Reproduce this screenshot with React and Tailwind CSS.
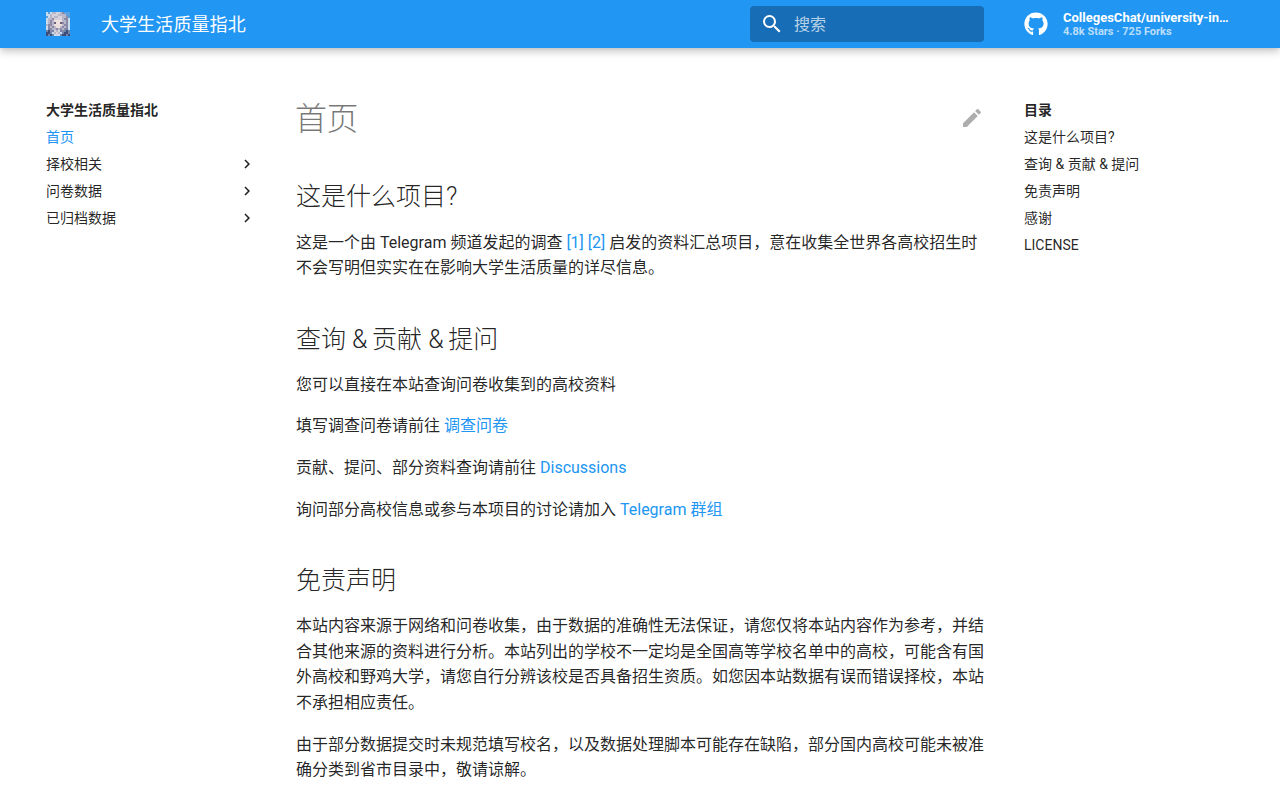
import { FaGithub } from 'react-icons/fa';

const FONT = { fontFamily: 'Roboto, "Noto Sans CJK SC", sans-serif' };

const PALETTE = {
  S: '#5d9fdc', C: '#c8dcec', H: '#b8b6c8', L: '#d6d2dc', D: '#8a8aa6',
  F: '#eee0de', E: '#6a5f78', N: '#3d4c78', B: '#7086ac',
};
const AVATAR = [
  'CSCHHLLHDSSS',
  'CCHLLLHHHHSS',
  'SCHLHHLLHHDS',
  'CHHDLLLLHDDC',
  'CHDHFFFFHHDC',
  'CHDHEFFEDHDC',
  'HDDHFFFFHDDC',
  'CDHDHFFHDHDC',
  'CBDHHDHDHDBC',
  'BNDBLHLBDBNB',
  'NNBCHLHCBNNB',
  'NBNBCLCBNNBN',
];

function Avatar() {
  return (
    <svg width="24" height="24" viewBox="0 0 12 12" shapeRendering="crispEdges" className="block">
      {AVATAR.flatMap((r, y) => [...r].map((c, x) => <rect key={`${x}-${y}`} x={x} y={y} width="1" height="1" fill={PALETTE[c]} />))}
    </svg>
  );
}

function Chevron() {
  return (
    <svg width="18" height="18" viewBox="0 0 24 24" fill="currentColor" className="text-black/87">
      <path d="M8.59 16.58 13.17 12 8.59 7.41 10 6l6 6-6 6-1.41-1.42z" />
    </svg>
  );
}

const Link = ({ children }) => <a className="text-[#2196f3]">{children}</a>;

const Amp = () => <span className="tracking-[-1.5px]">&</span>;

const H2 = ({ children }) => (
  <h2 className="text-[25px] font-light leading-[35px] h-[34px] mt-[41px] mb-4 text-black/87">{children}</h2>
);

const P = ({ children }) => <p className="my-4 text-base leading-[25.6px] text-black/87">{children}</p>;

const NavRow = ({ children, chevron, active, bold }) => (
  <div className={`h-[27px] flex items-center justify-between text-sm ${active ? 'text-[#2196f3]' : 'text-black/87'} ${bold ? 'font-bold' : ''}`}>
    <span>{children}</span>
    {chevron && <Chevron />}
  </div>
);

export default function App() {
  return (
    <div style={FONT} className="h-screen overflow-hidden bg-white flex flex-col">
      <header className="h-12 shrink-0 bg-[#2196f3] text-white flex items-center pl-[46px] shadow-[0_0_4px_rgba(0,0,0,0.1),0_4px_8px_rgba(0,0,0,0.2)] z-10">
        <Avatar />
        <div className="ml-[31px] mt-0.5 text-lg tracking-[0.1px] w-[649px]">大学生活质量指北</div>
        <div className="w-[234px] h-9 rounded-sm bg-[#186eb6] flex items-center pl-2.5">
          <svg width="24" height="24" viewBox="0 0 24 24" fill="currentColor" className="text-white">
            <path d="M9.5 3A6.5 6.5 0 0 1 16 9.5c0 1.61-.59 3.09-1.56 4.23l.27.27h.79l5 5-1.5 1.5-5-5v-.79l-.27-.27A6.516 6.516 0 0 1 9.5 16 6.5 6.5 0 0 1 3 9.5 6.5 6.5 0 0 1 9.5 3m0 2C7 5 5 7 5 9.5S7 14 9.5 14 14 12 14 9.5 12 5 9.5 5z" />
          </svg>
          <span className="ml-[10px] mt-0.5 text-base text-white/70">搜索</span>
        </div>
        <div className="ml-10 flex items-center">
          <FaGithub size={24} />
          <div className="ml-[15px] w-[166px]">
            <div className="truncate text-[13px] font-bold leading-[14px]">CollegesChat/university-information</div>
            <div className="text-[11px] font-bold leading-[13px] text-white/70">4.8k Stars · 725 Forks</div>
          </div>
        </div>
      </header>

      <main className="flex pl-[46px] pt-[50px]">
        <nav className="w-[210px] shrink-0 mt-[-2px]">
          <NavRow bold>大学生活质量指北</NavRow>
          <NavRow active>首页</NavRow>
          <NavRow chevron>择校相关</NavRow>
          <NavRow chevron>问卷数据</NavRow>
          <NavRow chevron>已归档数据</NavRow>
        </nav>

        <article className="ml-10 w-[688px] shrink-0">
          <div className="flex justify-between">
            <h1 className="text-[32px] font-light leading-[41.6px] mt-px mb-[38px] -ml-px tracking-[-0.5px] text-black/54">首页</h1>
            <svg width="24" height="24" viewBox="0 0 24 24" fill="currentColor" className="mt-2 text-black/32">
              <path d="M20.71 7.04c.39-.39.39-1.04 0-1.41l-2.34-2.34c-.37-.39-1.02-.39-1.41 0l-1.84 1.83 3.75 3.75M3 17.25V21h3.75L17.81 9.93l-3.75-3.75L3 17.25z" />
            </svg>
          </div>
          <h2 className="text-[25px] font-light leading-[35px] mb-4 text-black/87">这是什么项目?</h2>
          <P>这是一个由 Telegram 频道发起的调查 <Link>[1]</Link> <Link>[2]</Link> 启发的资料汇总项目，意在收集全世界各高校招生时不会写明但实实在在影响大学生活质量的详尽信息。</P>
          <H2>查询 <Amp /> 贡献 <Amp /> 提问</H2>
          <P>您可以直接在本站查询问卷收集到的高校资料</P>
          <P>填写调查问卷请前往 <Link>调查问卷</Link></P>
          <P>贡献、提问、部分资料查询请前往 <Link>Discussions</Link></P>
          <P>询问部分高校信息或参与本项目的讨论请加入 <Link>Telegram 群组</Link></P>
          <H2>免责声明</H2>
          <P>本站内容来源于网络和问卷收集，由于数据的准确性无法保证，请您仅将本站内容作为参考，并结合其他来源的资料进行分析。本站列出的学校不一定均是全国高等学校名单中的高校，可能含有国外高校和野鸡大学，请您自行分辨该校是否具备招生资质。如您因本站数据有误而错误择校，本站不承担相应责任。</P>
          <P>由于部分数据提交时未规范填写校名，以及数据处理脚本可能存在缺陷，部分国内高校可能未被准确分类到省市目录中，敬请谅解。</P>
        </article>

        <aside className="ml-10 w-[210px] shrink-0 mt-[-2px]">
          <NavRow bold>目录</NavRow>
          <NavRow>这是什么项目?</NavRow>
          <NavRow>查询 & 贡献 & 提问</NavRow>
          <NavRow>免责声明</NavRow>
          <NavRow>感谢</NavRow>
          <NavRow>LICENSE</NavRow>
        </aside>
      </main>
    </div>
  );
}
